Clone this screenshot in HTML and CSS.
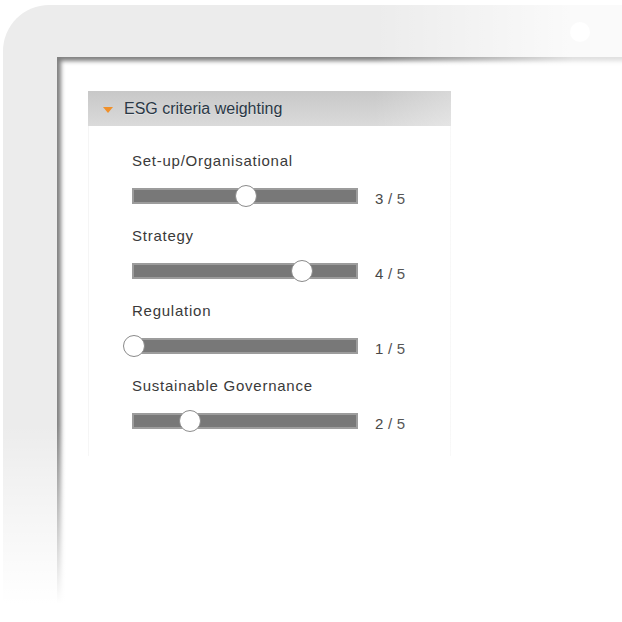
FILE: index.html
```html
<!DOCTYPE html>
<html lang="en">
<head>
  <meta charset="UTF-8" />
  <meta name="viewport" content="width=device-width, initial-scale=1.0"/>
  <title>ESG criteria weighting</title>
  <link rel="stylesheet" href="styles.css">
</head>
<body>
  <div class="device">
    <span class="camera"></span>
    <div class="screen">
      <div class="panel">
        <div class="panel-head">
          <span class="caret"></span>
          <span class="panel-title">ESG criteria weighting</span>
        </div>
        <div class="panel-body">
          <div class="criterion">
            <div class="criterion-label">Set-up/Organisational</div>
            <div class="slider">
              <div class="track"><span class="thumb" style="left: 112px;"></span></div>
              <span class="value">3 / 5</span>
            </div>
          </div>
          <div class="criterion">
            <div class="criterion-label">Strategy</div>
            <div class="slider">
              <div class="track"><span class="thumb" style="left: 168px;"></span></div>
              <span class="value">4 / 5</span>
            </div>
          </div>
          <div class="criterion">
            <div class="criterion-label">Regulation</div>
            <div class="slider">
              <div class="track"><span class="thumb" style="left: 0px;"></span></div>
              <span class="value">1 / 5</span>
            </div>
          </div>
          <div class="criterion">
            <div class="criterion-label">Sustainable Governance</div>
            <div class="slider">
              <div class="track"><span class="thumb" style="left: 56px;"></span></div>
              <span class="value">2 / 5</span>
            </div>
          </div>
        </div>
      </div>
    </div>
  </div>
</body>
</html>
```

FILE: styles.css
```css
html, body {
  height: 622px;
}

body {
  margin: 0;
  overflow: hidden;
  background: #fff;
  font-family: 'Liberation Sans', Arial, sans-serif;
}

/* tablet frame */
.device {
  position: relative;
  margin: 5px 0 0 3px;
  width: 619px;
  height: 617px;
  padding: 52px 0 0 54px;
  box-sizing: border-box;
  background: #ececec;
  border-radius: 46px 0 0 0;
  overflow: hidden;
}

/* fade of the frame to the right and to the bottom */
.device::after {
  content: "";
  position: absolute;
  inset: 0;
  pointer-events: none;
  background:
    linear-gradient(to bottom, rgba(255, 255, 255, 0) 68%, #fff 97%),
    linear-gradient(to right, rgba(255, 255, 255, 0) 60%, rgba(255, 255, 255, 0.75) 92%);
}

.camera {
  position: absolute;
  top: 17px;
  left: 567px;
  width: 20px;
  height: 20px;
  border-radius: 50%;
  background: #fff;
}

.screen {
  height: 100%;
  padding: 34px 0 0 31px;
  box-sizing: border-box;
  background: #fff;
  box-shadow: inset 4px 4px 4px rgba(0, 0, 0, 0.5);
}

/* panel */
.panel {
  width: 363px;
}

.panel-head {
  display: flex;
  align-items: center;
  height: 35px;
  padding-left: 15px;
  background: linear-gradient(#c8c8c8, #dadada);
}

.caret {
  width: 0;
  height: 0;
  border-left: 5px solid transparent;
  border-right: 5px solid transparent;
  border-top: 6px solid #f0902a;
  margin: 2px 11px 0 0;
}

.panel-title {
  font-size: 16px;
  color: #2a3846;
  text-shadow: 0 1px 0 rgba(255, 255, 255, 0.4);
}

.panel-body {
  padding: 26px 0 4px 43px;
  border-left: 1px solid #f5f5f5;
  border-right: 1px solid #f5f5f5;
}

.criterion {
  margin-bottom: 23px;
}

.criterion-label {
  height: 18px;
  line-height: 18px;
  font-size: 15px;
  letter-spacing: 0.75px;
  color: #3a3a3a;
  margin-bottom: 18px;
}

.slider {
  display: flex;
  align-items: center;
  height: 16px;
}

.track {
  position: relative;
  width: 226px;
  height: 16px;
  box-sizing: border-box;
  background: #787878;
  border: 2px solid #9c9c9c;
}

.thumb {
  position: absolute;
  top: 50%;
  width: 22px;
  height: 22px;
  margin: -11px 0 0 -11px;
  box-sizing: border-box;
  border-radius: 50%;
  background: #fff;
  border: 1.5px solid #8a8a8a;
}

.value {
  margin: 4px 0 0 17px;
  font-size: 15px;
  letter-spacing: 0.2px;
  color: #444;
}
```
